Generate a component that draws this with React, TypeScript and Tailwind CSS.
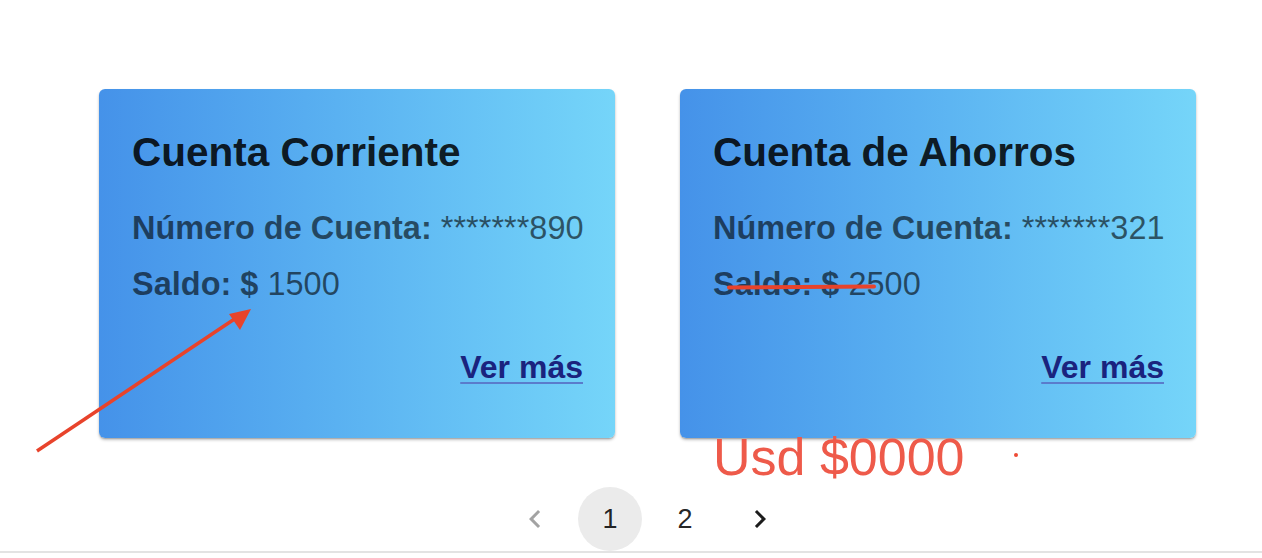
import React from "react";

const font = { fontFamily: '"Liberation Sans", Arial, Helvetica, sans-serif' };

function Card({ title, num, saldo, strike }: { title: string; num: string; saldo: string; strike?: boolean }) {
  return (
    <div className="relative w-[516px] h-[349px] shrink-0 rounded-[6px] bg-gradient-to-r from-[#4592e9] to-[#75d5f9] shadow-[0_2px_3px_rgba(0,0,0,0.25),0_1px_1px_rgba(0,0,0,0.14)] pl-[33px] pr-[32px] pt-[39px] flex flex-col">
      <div className="text-[40.5px] leading-[48px] font-bold text-black/[0.87] whitespace-nowrap">{title}</div>
      <div className="mt-[32px] text-[32.5px] leading-[40px] text-black/60 whitespace-nowrap">
        <span className="font-bold">Número de Cuenta:</span> {num}
      </div>
      <div className="relative mt-[16px] text-[32.5px] leading-[40px] text-black/60 whitespace-nowrap">
        <span className="font-bold">Saldo:</span> <span className="font-bold">$</span> {saldo}
        {strike && (
          <div className="absolute left-[14px] top-[21px] w-[149px] h-[4px] rounded-full bg-[#e8432b] -rotate-[0.4deg]" />
        )}
      </div>
      <div className="mt-[43px] flex justify-end">
        <a
          href="#"
          className="text-[32px] leading-[40px] font-bold text-[#1a237e] underline decoration-[#5a7ccc] decoration-[2px] underline-offset-[4px]"
        >
          Ver más
        </a>
      </div>
    </div>
  );
}

export default function App() {
  return (
    <div className="relative w-[1262px] h-[558px] bg-white overflow-hidden" style={font}>
      <div className="pt-[89px] pl-[99px] flex gap-[65px]">
        <Card title="Cuenta Corriente" num="*******890" saldo="1500" />
        <Card title="Cuenta de Ahorros" num="*******321" saldo="2500" strike />
      </div>

      <div className="mt-[49px] pl-[503px] flex items-center gap-[11px] h-[64px]">
        <div className="w-[64px] h-[64px] flex items-center justify-center text-[#a3a3a3]">
          <svg width="36" height="36" viewBox="0 0 24 24" fill="currentColor">
            <path d="M15.41 7.41 14 6l-6 6 6 6 1.41-1.41L10.83 12z" />
          </svg>
        </div>
        <div className="w-[64px] h-[64px] rounded-full bg-[#ebebeb] flex items-center justify-center text-[27px] text-black/[0.87]">
          1
        </div>
        <div className="w-[64px] h-[64px] flex items-center justify-center text-[27px] text-black/[0.87]">2</div>
        <div className="w-[64px] h-[64px] flex items-center justify-center text-[#1c1c1c]">
          <svg width="36" height="36" viewBox="0 0 24 24" fill="currentColor">
            <path d="M10 6 8.59 7.41 13.17 12l-4.58 4.59L10 18l6-6z" />
          </svg>
        </div>
      </div>
      <div className="h-[2px] bg-[#e3e3e3]" />

      {/* annotations */}
      <div className="absolute left-[713px] top-[427px] text-[52px] leading-[60px] text-[#ee5a4a] whitespace-nowrap">
        Usd $0000
      </div>
      <div className="absolute left-[1014px] top-[453px] w-[4px] h-[4px] rounded-full bg-[#ee4a35]" />
      <svg className="absolute left-0 top-0 pointer-events-none" width="1262" height="558">
        <line x1="37" y1="451" x2="236" y2="318" stroke="#e8432b" strokeWidth="3.5" />
        <polygon points="251,309 229,314 240,330" fill="#e8432b" />
      </svg>
    </div>
  );
}
